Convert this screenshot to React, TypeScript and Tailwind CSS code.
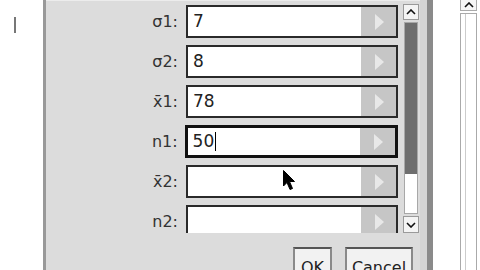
import React from "react";

const rows = [
  { label: "σ1:", value: "7" },
  { label: "σ2:", value: "8" },
  { label: "x̄1:", value: "78" },
  { label: "n1:", value: "50", focus: true },
  { label: "x̄2:", value: "" },
  { label: "n2:", value: "" },
];

function ArrowBtn() {
  return (
    <div className="w-[35px] h-full bg-[#c6c6c6] flex items-center justify-center shrink-0">
      <svg width="10" height="16" viewBox="0 0 10 16">
        <path d="M1 0 L10 8 L1 16 Z" fill="#e8e8e8" />
      </svg>
    </div>
  );
}

function Field({ label, value, focus }: { label: string; value: string; focus?: boolean }) {
  return (
    <div className="flex items-center h-[33px] shrink-0">
      <div className="w-[140px] text-right pr-[8px] text-[16px] text-[#333]">{label}</div>
      <div
        className={
          focus
            ? "flex h-full w-[214px] -ml-[1px] border-[3px] border-[#111] bg-white"
            : "flex h-full w-[212px] border-2 border-[#2a2a2a] bg-white"
        }
      >
        <div className="flex-1 flex items-center pl-[5px] text-[17px] text-[#222]">
          {value}
          {focus && <span className="inline-block w-[1px] h-[19px] bg-black ml-[1px]" />}
        </div>
        <ArrowBtn />
      </div>
    </div>
  );
}

function Chevron({ up }: { up?: boolean }) {
  return (
    <svg width="10" height="6" viewBox="0 0 10 6">
      <path d={up ? "M1 5 L5 1 L9 5" : "M1 1 L5 5 L9 1"} fill="none" stroke="#111" strokeWidth="1.6" />
    </svg>
  );
}

export default function App() {
  return (
    <div
      className="w-[480px] h-[270px] flex overflow-hidden relative bg-white"
      style={{ fontFamily: '"DejaVu Sans", sans-serif' }}
    >
      {/* left page */}
      <div className="w-[43px] bg-white relative shrink-0">
        <div className="absolute left-[14px] top-[17px] w-[2px] h-[16px] bg-[#777]" />
      </div>
      <div className="w-[3px] bg-[#999] shrink-0" />

      {/* dialog */}
      <div className="w-[374px] bg-[#dcdcdc] flex flex-col shrink-0 border-t border-[#ececec]">
        <div className="h-[232px] flex">
          <div className="flex-1 flex flex-col gap-[7px] pt-[4px] overflow-hidden">
            {rows.map((r) => (
              <Field key={r.label} {...r} />
            ))}
          </div>
          <div className="w-[16px] mr-[1px] ml-[5px] flex flex-col pt-[3px]">
            <div className="h-[16px] border border-[#9a9a9a] bg-[#f4f4f4] flex items-center justify-center">
              <Chevron up />
            </div>
            <div className="flex-1 my-[2px] mx-[1px] border border-[#a8a8a8] bg-white flex flex-col">
              <div className="h-[151px] bg-[#6e6e6e]" />
            </div>
            <div className="h-[17px] border border-[#9a9a9a] bg-[#f4f4f4] flex items-center justify-center">
              <Chevron />
            </div>
          </div>
        </div>
        <div className="h-[2px] bg-[#6a6a6a] ml-[9px] mt-[8px]" />
        <div className="h-[1px] bg-[#f0f0f0] ml-[9px]" />
        <div className="flex justify-end gap-[13px] pr-[7px] mt-[6px]">
          <div className="w-[39px] h-[30px] border-2 border-[#8a8a8a] border-t-[#555] bg-[#f2f2f2] flex justify-center pt-[7px] text-[16px] text-[#222]">
            OK
          </div>
          <div className="w-[68px] h-[30px] border-2 border-[#8a8a8a] border-t-[#555] bg-[#f2f2f2] flex justify-center pt-[7px] text-[16px] text-[#222]">
            Cancel
          </div>
        </div>
      </div>

      {/* right edge */}
      <div className="w-[7px] bg-[#d4d4d4] shrink-0" />
      <div className="w-[6px] bg-[#8a8a8a] shrink-0" />
      <div className="w-[27px] bg-white shrink-0" />
      <div className="w-[17px] flex flex-col shrink-0">
        <div className="h-[11px] border border-t-0 border-[#aaa] bg-[#f6f6f6] flex items-center justify-center">
          <Chevron up />
        </div>
        <div className="flex-1 mt-[2px] border border-[#aaa] border-b-0 bg-white flex">
          <div className="w-[5px] border-r border-[#ccc]" />
        </div>
      </div>
      <div className="w-[3px] bg-white shrink-0" />

      {/* mouse pointer */}
      <svg className="absolute left-[283px] top-[170px]" width="13" height="21" viewBox="0 0 13 21">
        <path d="M0.5 0.5 L0.5 16 L4 12.5 L7 19.5 L9.5 18.5 L6.5 11.5 L11.5 11.5 Z" fill="#000" stroke="#000" strokeWidth="1" />
      </svg>
    </div>
  );
}
